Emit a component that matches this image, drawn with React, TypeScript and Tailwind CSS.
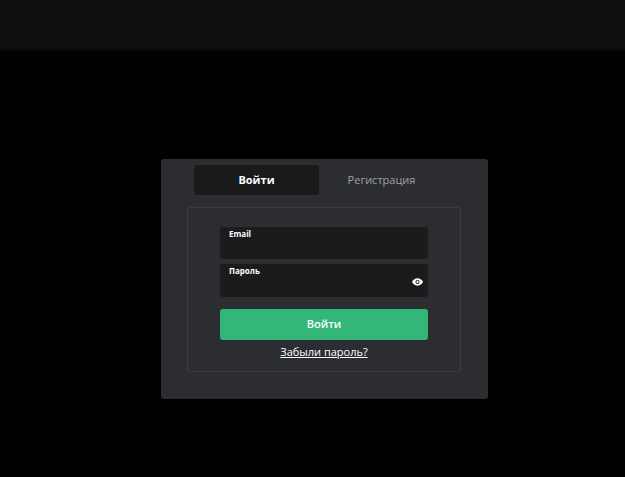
export default function App() {
  return (
    <div className="w-[625px] h-[477px] bg-black relative overflow-hidden" style={{ fontFamily: "'Open Sans','Noto Sans',sans-serif" }}>
      <div className="h-[48px] bg-[#0e0f11]" />
      <div className="h-[8px] bg-gradient-to-b from-[#0e0f11] to-black" />
      <div className="ml-[161px] mt-[103px] w-[327px] h-[240px] bg-[#2c2d31] rounded-[3px] pt-[6px]">
        <div className="flex ml-[33px] w-[250px]">
          <div className="w-[125px] h-[30px] bg-[#1a1a1a] rounded-[3px] flex items-center justify-center text-[11px] font-bold text-white">Войти</div>
          <div className="w-[125px] h-[30px] flex items-center justify-center text-[11px] text-[#a0a0a4]">Регистрация</div>
        </div>
        <div className="ml-[26px] mt-[12px] w-[274px] h-[165px] border border-[#3b3c40] rounded-[3px] pt-[19px] px-[32px]">
          <div className="w-[208px] h-[32px] bg-[#1b1b1b] rounded-[3px] px-[9px] pt-[1px] text-[8px] font-bold text-white">Email</div>
          <div className="w-[208px] h-[33px] mt-[5px] bg-[#1b1b1b] rounded-[3px] px-[9px] pt-[1px] text-[8px] font-bold text-white relative">
            Пароль
            <svg className="absolute right-[5px] top-[14px]" width="11" height="8" viewBox="0 0 24 16">
              <path d="M12 0C6.5 0 2 4 0 8c2 4 6.5 8 12 8s10-4 12-8C22 4 17.5 0 12 0z" fill="white" />
              <circle cx="12" cy="8" r="4.5" fill="#1b1b1b" />
              <circle cx="12" cy="8" r="2.5" fill="white" />
            </svg>
          </div>
          <div className="w-[208px] h-[31px] mt-[12px] bg-[#33b778] rounded-[3px] flex items-center justify-center text-[11px] font-semibold text-white">Войти</div>
          <div className="mt-[4px] w-[208px] text-center text-[11px] text-white underline">Забыли пароль?</div>
        </div>
      </div>
    </div>
  );
}
